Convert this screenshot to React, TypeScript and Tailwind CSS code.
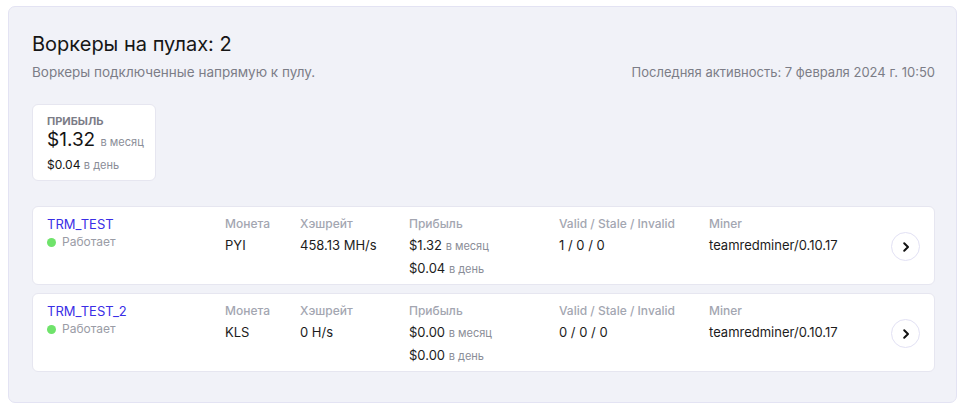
import React from "react";

type Worker = {
  name: string;
  coin: string;
  hash: string;
  month: string;
  day: string;
  shares: string;
  miner: string;
};

const workers: Worker[] = [
  { name: "TRM_TEST", coin: "PYI", hash: "458.13 MH/s", month: "$1.32", day: "$0.04", shares: "1 / 0 / 0", miner: "teamredminer/0.10.17" },
  { name: "TRM_TEST_2", coin: "KLS", hash: "0 H/s", month: "$0.00", day: "$0.00", shares: "0 / 0 / 0", miner: "teamredminer/0.10.17" },
];

function Label({ children }: { children: React.ReactNode }) {
  return <div className="text-[12px] leading-[16px] font-medium text-[#a3a6b1] whitespace-nowrap">{children}</div>;
}

function Row({ w }: { w: Worker }) {
  return (
    <div className="flex items-start bg-white border border-[#e6e6f0] rounded-[6px] px-[14px] pt-[9px] pb-[7px]">
      <div className="w-[178px] shrink-0">
        <div className="text-[13px] leading-[16px] text-[#3a2ee6]">{w.name}</div>
        <div className="flex items-center gap-[6px] mt-[1px] text-[12px] leading-[18px] text-[#9a9ca6]">
          <span className="w-[9px] h-[9px] rounded-full bg-[#6fe36b] inline-block"></span>
          Работает
        </div>
      </div>
      <div className="w-[75px] shrink-0">
        <Label>Монета</Label>
        <div className="mt-[5px] text-[13px] leading-[16px] text-[#1c1c1c]">{w.coin}</div>
      </div>
      <div className="w-[109px] shrink-0">
        <Label>Хэшрейт</Label>
        <div className="mt-[5px] text-[13px] leading-[16px] text-[#1c1c1c] whitespace-nowrap">{w.hash}</div>
      </div>
      <div className="w-[150px] shrink-0">
        <Label>Прибыль</Label>
        <div className="mt-[5px] text-[13px] leading-[16px] text-[#1c1c1c] whitespace-nowrap">
          {w.month} <span className="text-[11px] text-[#8a8d97]">в месяц</span>
        </div>
        <div className="mt-[6px] text-[13px] leading-[16px] text-[#1c1c1c] whitespace-nowrap">
          {w.day} <span className="text-[11px] text-[#8a8d97]">в день</span>
        </div>
      </div>
      <div className="w-[150px] shrink-0">
        <Label>Valid / Stale / Invalid</Label>
        <div className="mt-[5px] text-[13px] leading-[16px] text-[#1c1c1c]">{w.shares}</div>
      </div>
      <div className="flex-1">
        <Label>Miner</Label>
        <div className="mt-[5px] text-[13px] leading-[16px] text-[#1c1c1c]">{w.miner}</div>
      </div>
      <div className="self-center shrink-0">
        <button className="w-[29px] h-[29px] rounded-full bg-white border border-[#e2e1f4] flex items-center justify-center">
          <svg width="12" height="12" viewBox="0 0 12 12" fill="none">
            <path d="M4.2 2.2 L8 6 L4.2 9.8" stroke="#111" strokeWidth="2" strokeLinecap="round" strokeLinejoin="round" />
          </svg>
        </button>
      </div>
    </div>
  );
}

export default function App() {
  return (
    <div className="bg-white min-h-[412px] pt-[6px] px-[8px]" style={{ fontFamily: "Inter, 'Noto Sans', sans-serif" }}>
      <div className="bg-[#f1f2f8] border border-[#e3e3f3] rounded-[7px] pl-[23px] pr-[21px] pt-[23px] pb-[30px]">
        <div className="text-[20px] leading-[28px] text-[#161616]">Воркеры на пулах: 2</div>
        <div className="mt-[4px] flex justify-between text-[13px] leading-[20px] text-[#7c7d87]">
          <span className="text-[13.5px]">Воркеры подключенные напрямую к пулу.</span>
          <span>Последняя активность: 7 февраля 2024 г. 10:50</span>
        </div>
        <div className="mt-[22px] w-[124px] bg-white border border-[#e6e6f0] rounded-[6px] px-[14px] pt-[9px] pb-[6px] whitespace-nowrap">
          <div className="text-[11px] leading-[14px] font-bold text-[#7c7d87]">ПРИБЫЛЬ</div>
          <div className="text-[19px] leading-[24px] text-[#141414]">
            $1.32 <span className="text-[11px] text-[#8a8d97]">в месяц</span>
          </div>
          <div className="mt-[2px] text-[12px] leading-[18px] text-[#141414]">
            $0.04 <span className="text-[11px] text-[#8a8d97]">в день</span>
          </div>
        </div>
        <div className="mt-[25px] flex flex-col gap-[8px]">
          {workers.map((w) => (
            <Row key={w.name} w={w} />
          ))}
        </div>
      </div>
    </div>
  );
}
